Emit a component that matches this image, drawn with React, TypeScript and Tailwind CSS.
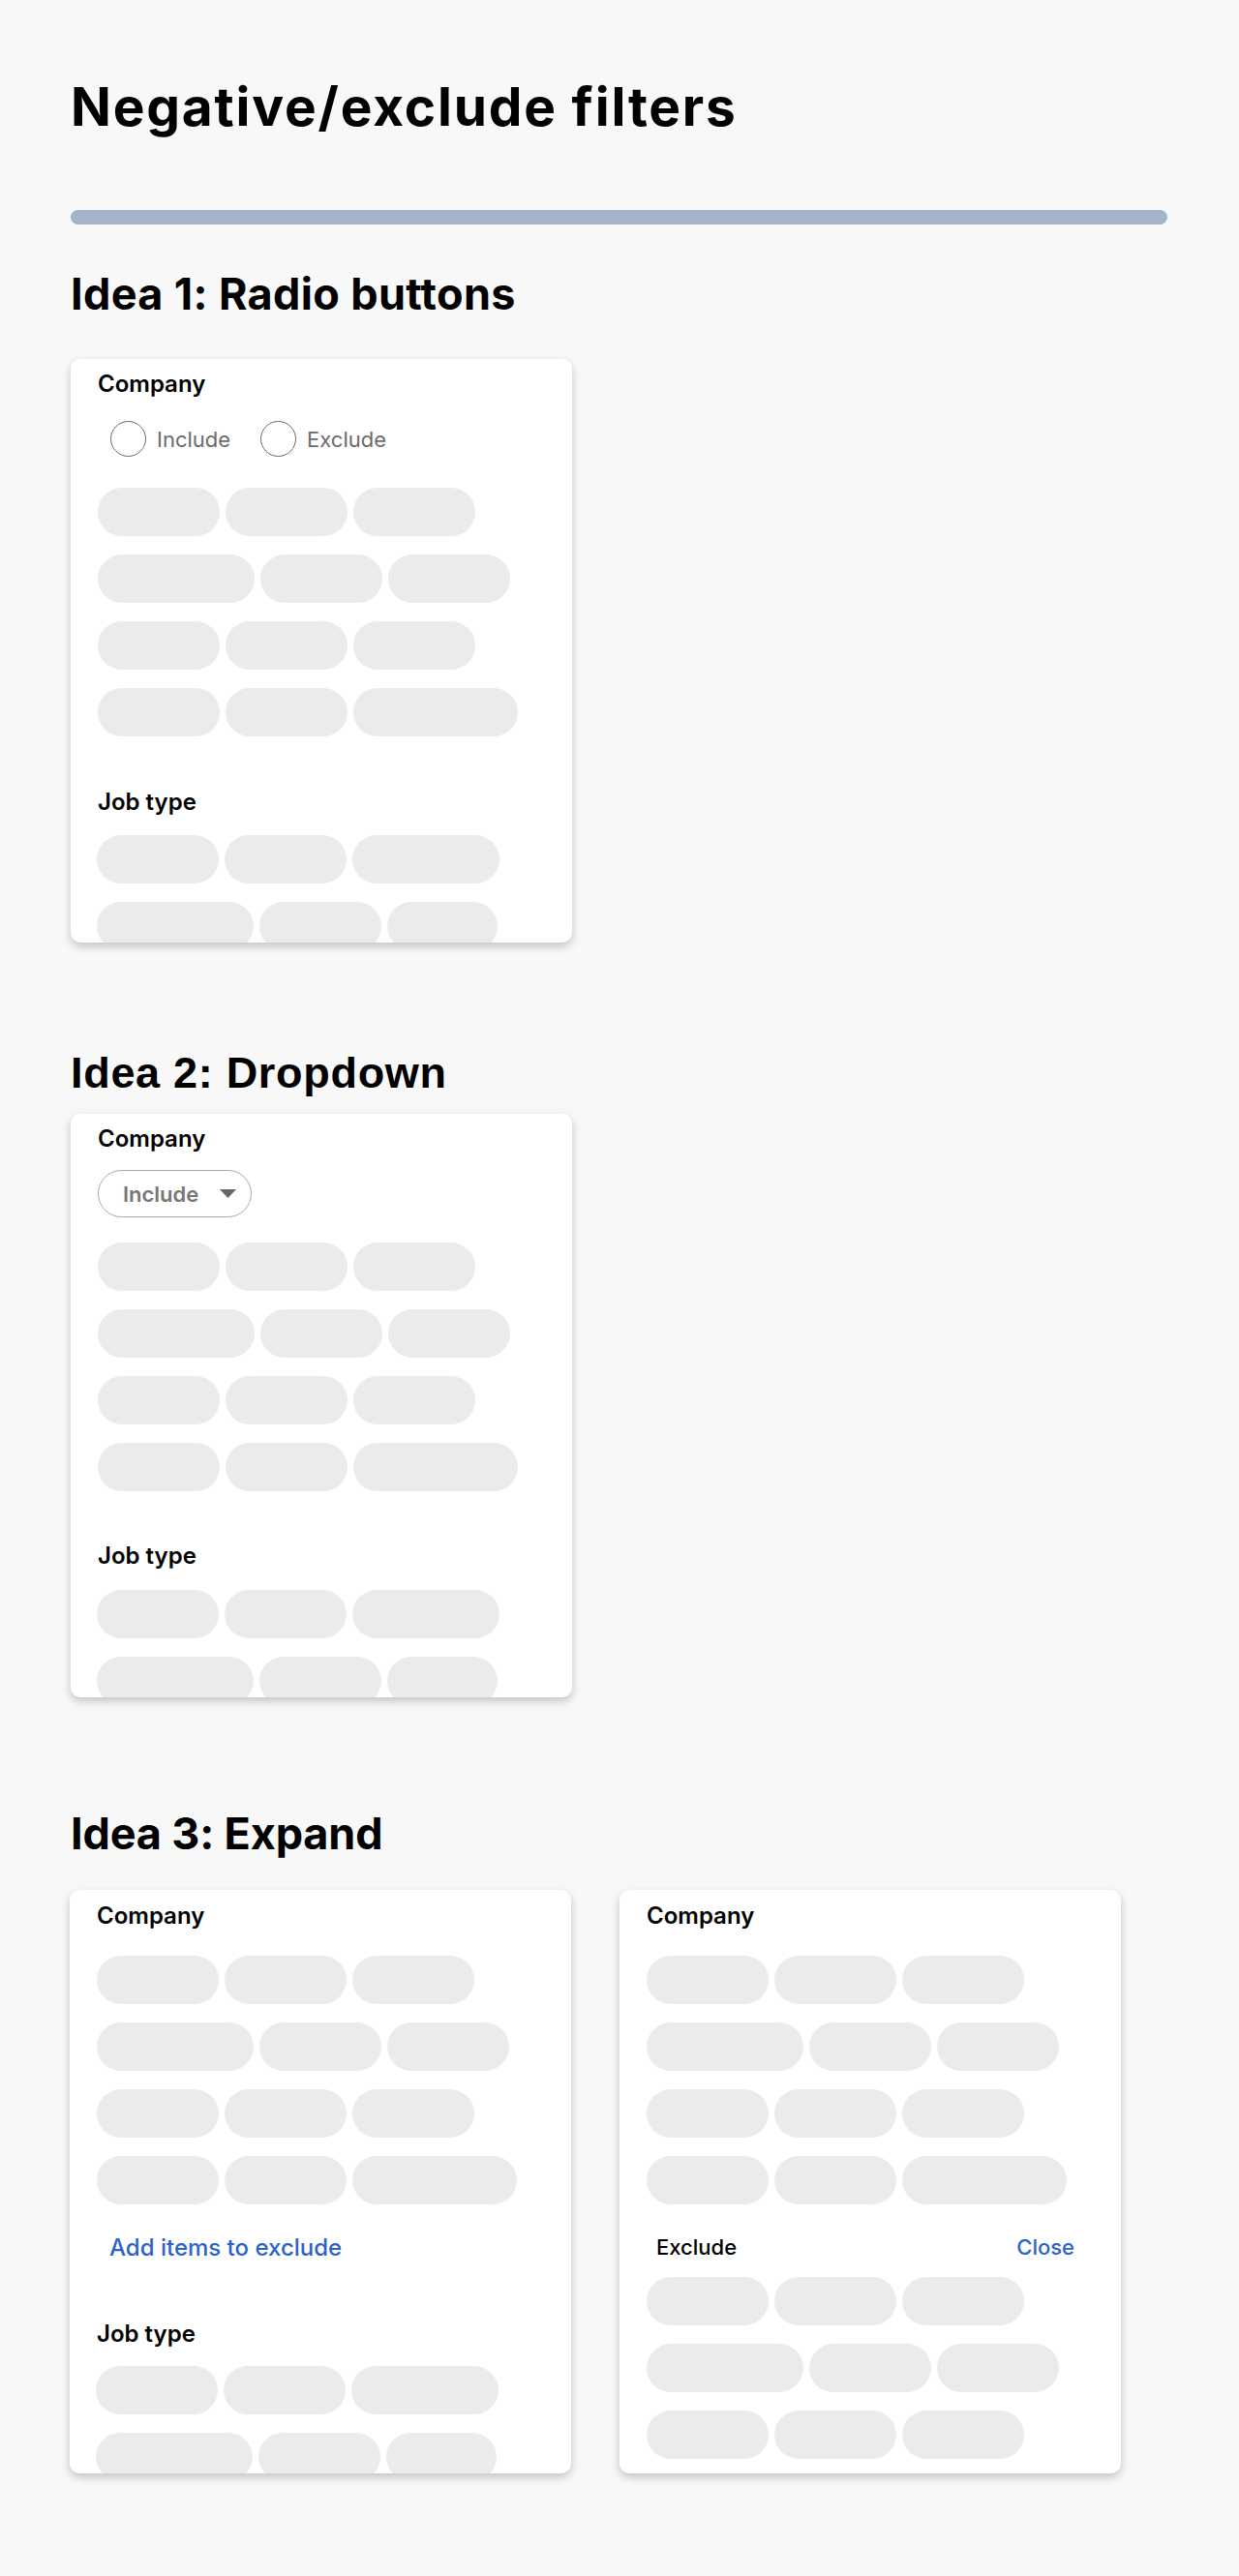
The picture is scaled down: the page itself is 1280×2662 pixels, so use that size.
import React from 'react'

type Rows = number[][]

const companyRows: Rows = [
    [126, 126, 126],
    [162, 126, 126],
    [126, 126, 126],
    [126, 126, 170],
]

const jobRows: Rows = [
    [126, 126, 152],
    [162, 126, 114],
]

const excludeRows: Rows = [
    [126, 126, 126],
    [162, 126, 126],
    [126, 126, 126],
]

function Pills({ rows }: { rows: Rows }) {
    return (
        <div className="flex flex-col gap-y-[19px]">
            {rows.map((row, i) => (
                <div key={i} className="flex gap-[6px]">
                    {row.map((w, j) => (
                        <div
                            key={j}
                            className="h-[50px] shrink-0 rounded-full bg-[#ebebeb]"
                            style={{ width: w }}
                        />
                    ))}
                </div>
            ))}
        </div>
    )
}

function Card({ children }: { children: React.ReactNode }) {
    return (
        <div className="w-[518px] h-[603px] overflow-hidden rounded-[10px] bg-white shadow-[0_4px_10px_rgba(0,0,0,0.22)] px-[28px]">
            {children}
        </div>
    )
}

function Label({ children }: { children: React.ReactNode }) {
    return <p className="text-[24px] leading-[28px] font-semibold text-black">{children}</p>
}

function Radio({ label }: { label: string }) {
    return (
        <label className="flex items-center gap-[11px]">
            <span className="block w-[37px] h-[37px] rounded-full border-[1.5px] border-[#6b6b6b]" />
            <span className="text-[22px] leading-[26px] text-[#6b6b6b]">{label}</span>
        </label>
    )
}

export default function App() {
    return (
        <div className="min-h-[2662px] bg-[#f8f8f8] px-[73px] pt-[78px] pb-[106px] font-['Inter',sans-serif] text-black">
            <h1 className="text-[55px] leading-[64px] font-bold tracking-[1.8px]">
                Negative/exclude filters
            </h1>

            <div className="mt-[75px] h-[15px] w-[1133px] rounded-full bg-[#a3b3c9]" />

            {/* Idea 1 */}
            <h2 className="mt-[46px] text-[45px] leading-[52px] font-bold tracking-[0.35px]">
                Idea 1: Radio buttons
            </h2>
            <div className="mt-[41px]">
                <Card>
                    <div className="pt-[12px]">
                        <Label>Company</Label>
                        <div className="mt-[24px] ml-[13px] flex items-center gap-[31px]">
                            <Radio label="Include" />
                            <Radio label="Exclude" />
                        </div>
                        <div className="mt-[32px]">
                            <Pills rows={companyRows} />
                        </div>
                        <div className="mt-[54px]">
                            <Label>Job type</Label>
                        </div>
                        <div className="mt-[20px] -ml-[1px]">
                            <Pills rows={jobRows} />
                        </div>
                    </div>
                </Card>
            </div>

            {/* Idea 2 */}
            <h2 className="mt-[109px] font-['Liberation_Sans',Arial,sans-serif] text-[45px] leading-[52px] font-bold tracking-[0.7px]">
                Idea 2: Dropdown
            </h2>
            <div className="mt-[16px]">
                <Card>
                    <div className="pt-[12px]">
                        <Label>Company</Label>
                        <button className="mt-[18px] flex h-[49px] w-[159px] items-center justify-between rounded-full border border-[#a8a8a8] pl-[25px] pr-[15px]">
                            <span className="text-[22px] leading-[26px] font-semibold text-[#777777]">Include</span>
                            <svg width="17" height="9" viewBox="0 0 17 9">
                                <path d="M0 0 H17 L8.5 9 Z" fill="#666666" />
                            </svg>
                        </button>
                        <div className="mt-[26px]">
                            <Pills rows={companyRows} />
                        </div>
                        <div className="mt-[53px]">
                            <Label>Job type</Label>
                        </div>
                        <div className="mt-[21px] -ml-[1px]">
                            <Pills rows={jobRows} />
                        </div>
                    </div>
                </Card>
            </div>

            {/* Idea 3 */}
            <h2 className="mt-[115px] text-[45px] leading-[52px] font-bold tracking-[-0.15px]">
                Idea 3: Expand
            </h2>
            <div className="mt-[32px] flex gap-[50px] -ml-[1px]">
                <Card>
                    <div className="pt-[13px]">
                        <Label>Company</Label>
                        <div className="mt-[27px]">
                            <Pills rows={companyRows} />
                        </div>
                        <p className="mt-[31px] ml-[13px] text-[24px] leading-[28px] font-medium text-[#2b63c6]">
                            Add items to exclude
                        </p>
                        <div className="mt-[61px]">
                            <Label>Job type</Label>
                        </div>
                        <div className="mt-[19px] -ml-[1px]">
                            <Pills rows={jobRows} />
                        </div>
                    </div>
                </Card>
                <Card>
                    <div className="pt-[13px]">
                        <Label>Company</Label>
                        <div className="mt-[27px]">
                            <Pills rows={companyRows} />
                        </div>
                        <div className="mt-[31px] ml-[10px] mr-[20px] flex items-center justify-between">
                            <span className="text-[22px] leading-[26px] font-medium">Exclude</span>
                            <span className="text-[22px] leading-[26px] font-medium text-[#2b63c6]">Close</span>
                        </div>
                        <div className="mt-[18px]">
                            <Pills rows={excludeRows} />
                        </div>
                    </div>
                </Card>
            </div>
        </div>
    )
}
